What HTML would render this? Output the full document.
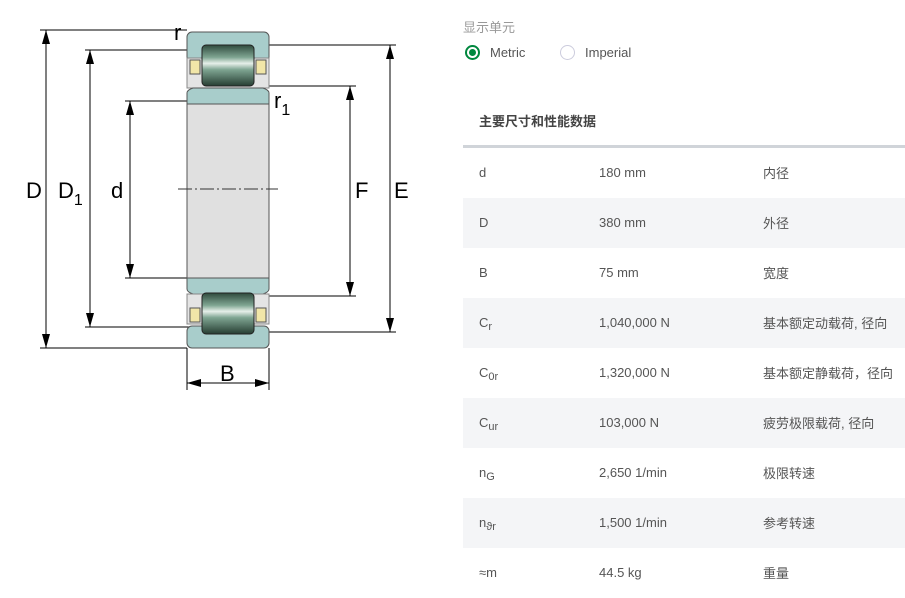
<!DOCTYPE html>
<html><head><meta charset="utf-8"><style>
body{margin:0;width:905px;height:593px;background:#fff;font-family:"Liberation Sans","Noto Sans CJK SC",sans-serif;color:#444;position:relative;overflow:hidden}
.abs{position:absolute}
.lbl{left:463px;top:17px;font-size:13px;color:#999}
.radio{top:45px;font-size:13px;color:#555;display:flex;align-items:center}
.rc{width:15px;height:15px;border-radius:50%;box-sizing:border-box;margin-right:10px}
table{position:absolute;left:463px;top:98px;width:442px;border-collapse:collapse;font-size:13px;color:#555}
th{text-align:left;font-weight:bold;height:47px;padding:0 0 0 16px;border-bottom:3px solid #d0d4d9;color:#444;line-height:16px}
td{height:50px;padding:0;vertical-align:middle;line-height:14px}
td:first-child{padding-left:16px;width:120px}
td:nth-child(2){width:164px}
td span{position:relative;top:1px}
tr.g td{background:#f4f5f7}
sub{font-size:11px;vertical-align:-3px;line-height:0}
</style></head><body>
<svg class="abs" style="left:0;top:0" width="440" height="400" viewBox="0 0 440 400">
<defs>
<linearGradient id="rl" x1="0" y1="0" x2="0" y2="1">
<stop offset="0" stop-color="#2f4a3d"/><stop offset=".3" stop-color="#7fa592"/><stop offset=".45" stop-color="#e6efe9"/><stop offset=".6" stop-color="#7fa592"/><stop offset="1" stop-color="#263d32"/></linearGradient>
</defs>
<g stroke="#000" stroke-width="1" fill="none">
<line x1="40" y1="30" x2="187" y2="30"/><line x1="40" y1="348" x2="187" y2="348"/>
<line x1="85" y1="50" x2="200" y2="50"/><line x1="85" y1="327" x2="200" y2="327"/>
<line x1="125" y1="101" x2="187" y2="101"/><line x1="125" y1="278" x2="187" y2="278"/>
<line x1="255" y1="86" x2="356" y2="86"/><line x1="255" y1="296" x2="356" y2="296"/>
<line x1="260" y1="45" x2="396" y2="45"/><line x1="260" y1="332" x2="396" y2="332"/>
<line x1="187" y1="348" x2="187" y2="390"/><line x1="269" y1="348" x2="269" y2="390"/>
<line x1="46" y1="30" x2="46" y2="348"/><line x1="90" y1="50" x2="90" y2="327"/>
<line x1="130" y1="101" x2="130" y2="278"/><line x1="350" y1="86" x2="350" y2="296"/>
<line x1="390" y1="45" x2="390" y2="332"/><line x1="187" y1="383" x2="269" y2="383"/>
</g>
<g fill="#000">
<path d="M46 30l-4 14h8z M46 348l-4-14h8z M90 50l-4 14h8z M90 327l-4-14h8z M130 101l-4 14h8z M130 278l-4-14h8z M350 86l-4 14h8z M350 296l-4-14h8z M390 45l-4 14h8z M390 332l-4-14h8z M187 383l14-4v8z M269 383l-14-4v8z"/>
</g>
<rect x="187" y="100" width="82" height="180" fill="#e0e0e0" stroke="#555"/>
<line x1="178" y1="189" x2="278" y2="189" stroke="#333" stroke-dasharray="14 3 2 3"/>
<rect x="187" y="32" width="82" height="30" rx="5" fill="#a8cdcb" stroke="#555"/>
<rect x="187" y="58" width="82" height="30" fill="#e4e4e4" stroke="#888"/>
<rect x="190" y="60" width="10" height="14" fill="#f1e6a8" stroke="#555"/>
<rect x="256" y="60" width="10" height="14" fill="#f1e6a8" stroke="#555"/>
<path d="M187 104V93q0-3 6-5h70q6 2 6 5v11z" fill="#a8cdcb" stroke="#555"/>
<rect x="202" y="45" width="52" height="41" rx="4" fill="url(#rl)" stroke="#222"/>
<path d="M187 278v11q0 3 6 5h70q6-2 6-5v-11z" fill="#a8cdcb" stroke="#555"/>
<rect x="187" y="294" width="82" height="30" fill="#e4e4e4" stroke="#888"/>
<rect x="190" y="308" width="10" height="14" fill="#f1e6a8" stroke="#555"/>
<rect x="256" y="308" width="10" height="14" fill="#f1e6a8" stroke="#555"/>
<rect x="187" y="326" width="82" height="22" rx="5" fill="#a8cdcb" stroke="#555"/>
<rect x="202" y="293" width="52" height="41" rx="4" fill="url(#rl)" stroke="#222"/>
<g font-family="Liberation Sans,sans-serif" font-size="22" fill="#000">
<text x="174" y="40">r</text>
<text x="274" y="108">r<tspan font-size="16" dy="7">1</tspan></text>
<text x="26" y="198">D</text>
<text x="58" y="198">D<tspan font-size="16" dy="7">1</tspan></text>
<text x="111" y="198">d</text>
<text x="355" y="198">F</text>
<text x="394" y="198">E</text>
<text x="220" y="381">B</text>
</g>
</svg>
<div class="abs lbl">显示单元</div>
<div class="abs radio" style="left:465px"><span class="rc" style="border:2px solid #00873e;display:flex;align-items:center;justify-content:center"><span style="width:7px;height:7px;border-radius:50%;background:#00873e"></span></span>Metric</div>
<div class="abs radio" style="left:560px"><span class="rc" style="border:1px solid #ccd"></span>Imperial</div>
<table>
<tr><th colspan="3">主要尺寸和性能数据</th></tr>
<tr><td>d</td><td>180 mm</td><td><span>内径</span></td></tr>
<tr class="g"><td>D</td><td>380 mm</td><td><span>外径</span></td></tr>
<tr><td>B</td><td>75 mm</td><td><span>宽度</span></td></tr>
<tr class="g"><td>C<sub>r</sub></td><td>1,040,000 N</td><td><span>基本额定动载荷, 径向</span></td></tr>
<tr><td>C<sub>0r</sub></td><td>1,320,000 N</td><td><span>基本额定静载荷，径向</span></td></tr>
<tr class="g"><td>C<sub>ur</sub></td><td>103,000 N</td><td><span>疲劳极限载荷, 径向</span></td></tr>
<tr><td>n<sub>G</sub></td><td>2,650 1/min</td><td><span>极限转速</span></td></tr>
<tr class="g"><td>n<sub>ϑr</sub></td><td>1,500 1/min</td><td><span>参考转速</span></td></tr>
<tr><td>≈m</td><td>44.5 kg</td><td><span>重量</span></td></tr>
</table>
</body></html>
